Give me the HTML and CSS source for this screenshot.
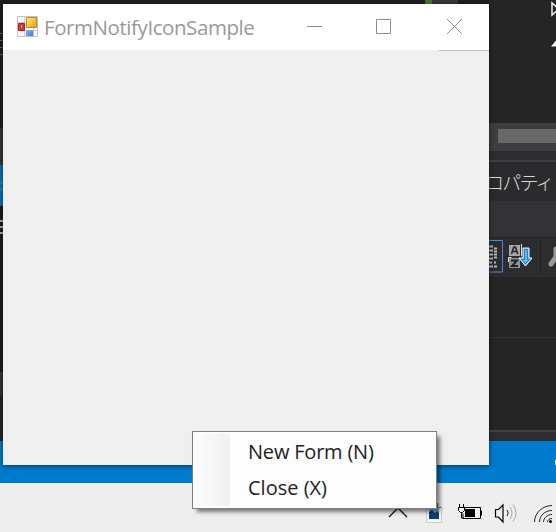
FILE: index.html
```html
<!DOCTYPE html>
<html lang="en">
<head>
<meta charset="utf-8">
<title>FormNotifyIconSample</title>
<link rel="stylesheet" href="styles.css">
</head>
<body>
<div class="desktop">
  <div class="ide">
    <div class="ide-main">
      <div class="ide-left">
        <div class="code-edge"><i></i><i></i><i></i><i></i></div>
        <div class="left-scroll"></div>
        <div class="left-tab"><i></i><i></i></div>
        <div class="left-list"><i></i><i></i><i></i></div>
        <div class="left-bar"></div>
      </div>
      <div class="tabs-edge"><i class="green"></i><i class="grey"></i></div>
      <div class="ide-right">
        <div class="explorer">
          <svg width="67" height="60" viewBox="489 0 67 60"><path d="M552 3v12l7-6z" fill="none" stroke="#eee" stroke-width="1.5"/><path d="M551 46.500L558 38v8.500z" fill="#fff"/></svg>
        </div>
        <div class="hscroll"><div class="thumb"></div></div>
        <div class="splitter"></div>
        <div class="props-title">ロパティ</div>
        <div class="props-object"></div>
        <div class="props-tools">
          <svg width="67" height="39" viewBox="489 238 67 39">
            <path d="M489 240.500H502.500V272H489" fill="none" stroke="#3b91dc"/>
            <path d="M489 246.500h4M489 250.500h4M489 254.500h4M489 258.500h4M489 262.500h3M489 266.500h4" stroke="#b5b5b5" stroke-width="2"/>
            <path d="M494 248.500h3M494 251.500h3M494 254.500h3M494 257.500h3M494 262.500h2M494 266.500h3" stroke="#b5b5b5" stroke-width="2"/>
            <path d="M509 245h11v11h-11z" fill="#aaa8a5"/><path d="M511.500 254l2.300-7h1.600l2.300 7M512.500 251.500h4.500" fill="none" stroke="#29292c" stroke-width="1.700"/>
            <path d="M509 258h11v10h-11z" fill="#929292"/><path d="M511 260.500h6l-5 5.500h6" fill="none" stroke="#222" stroke-width="2"/>
            <path d="M508.500 262v-4.500h3M521.500 244v12" fill="none" stroke="#ddd"/>
            <path d="M523 248h6v10h3l-6.500 8-6.500-8h4z" fill="#55b4f5" stroke="#eef6fc"/><path d="M524.500 249.500h3v10h2l-4 4-4-4h3z" fill="#59bafa" stroke="#23699c" stroke-width=".7"/>
            <path d="M540.500 240v34" stroke="#222225"/>
            <path d="M551 264l5-7v-8" fill="none" stroke="#999" stroke-width="5" stroke-linecap="round" stroke-linejoin="round"/>
          </svg>
        </div>
        <div class="props-grid"></div>
        <div class="props-help"></div>
        <div class="ide-margin"></div>
      </div>
    </div>
    <div class="statusbar"><span class="grip"></span></div>
  </div>
  <div class="taskbar">
    <svg width="176" height="49" viewBox="380 483 176 49">
      <path d="M389 517l9-9 9 9" fill="none" stroke="#111" stroke-width="1.300"/>
      <path d="M426.500 503.500h11l4 4v15h-15z" fill="#f6f4f1" stroke="#cfcac4"/><path d="M437.500 503v4.500h4" fill="none" stroke="#777"/>
      <path d="M429 508h10v11h-10z" fill="#76b7e5"/><path d="M429 512l3-2 3 3 2-2 2 2v6h-10z" fill="#073f7c"/>
      <path d="M464 507.500h16.500v11H463v-5M481.500 510.500v5" fill="none" stroke="#000"/><path d="M465 509h10v8h-10z"/>
      <path d="M459.500 504v3M463.500 504v3M458.500 507.500h6v3l-2 2h-2l-2-2zM461.500 512v6h2" fill="none" stroke="#000"/>
      <path d="M495.500 509.500h3l4.500-4.500v17l-4.500-5h-3z" fill="none" stroke="#000" stroke-width="1.200"/><path d="M507 510q2.500 3 0 6" fill="none" stroke="#222"/><path d="M510 507q4 6 0 12M513 504.500q6 8.500 0 17" fill="none" stroke="#aaa"/>
      <path d="M534.500 522c0-9 8-16.500 17.500-16.500M539.500 522c0-6 5-11.500 12.500-11.500M543.500 522c0-4 4-7.500 8.500-7.500M547.500 522c0-2 2-3.500 4.500-3.500" fill="none" stroke="#222"/><circle cx="550.500" cy="521.500" r="1.500"/>
    </svg>
  </div>

  <div class="window">
    <div class="titlebar">
      <svg class="app-icon" width="22" height="22" viewBox="0 0 22 22">
        <defs><linearGradient id="gold" x2="1" y2="1"><stop stop-color="#ffe98a"/><stop offset="1" stop-color="#dda000"/></linearGradient><linearGradient id="blue" x2="1" y2="1"><stop stop-color="#8ab9f5"/><stop offset="1" stop-color="#3974d3"/></linearGradient></defs>
        <path d="M.5.500h20v20H.5z" fill="#f8f9fb" stroke="#bdc3ce"/><path d="M7.500 1v19M1 14.500h19M16.500 12v8M1 6.500h7" stroke="#c5cad3"/>
        <path d="M9.500 1.500h10v10h-10z" fill="url(#gold)" stroke="#b98e17"/><path d="M1.500 7.500h6v7h-6z" fill="#c9372e" stroke="#a52823"/><path d="M4 9h1v3H4z" fill="#ffb5a6"/><path d="M9 14h7v6H9z" fill="url(#blue)"/>
      </svg>
      <span class="caption">FormNotifyIconSample</span>
      <svg class="controls" width="189" height="46" viewBox="300 4 189 46" fill="none" stroke="#8c8c8c"><path d="M307 26.500h15M376.500 19.500h14v14h-14zM447 19l15 15M462 19l-15 15"/></svg>
    </div>
    <div class="client"><div class="edge"></div></div>
  </div>

  <div class="menu">
    <div class="gutter"></div>
    <div class="items"><div class="item">New Form (N)</div><div class="item close">Close (X)</div></div>
  </div>
</div>
</body>
</html>
```
FILE: styles.css
```css
* { box-sizing: border-box; }
body { margin: 0; overflow: hidden; }
svg { display: block; }
.desktop { position: relative; width: 556px; height: 532px; overflow: hidden; background: #252526; font-family: "Open Sans", "Noto Sans CJK JP", sans-serif; }
.ide { height: 483px; display: flex; flex-direction: column; }
.ide-main { height: 441px; display: flex; }
.ide-left { width: 3px; }
.code-edge { height: 128px; padding-top: 33px; background: #1e1e1e; }
.code-edge i { display: block; height: 1px; margin-bottom: 6px; background: #527052; }
.left-scroll { height: 37px; background: #37373b; }
.left-tab { height: 41px; padding: 17px 0 0 1px; background: #0870b8; }
.left-tab i { display: block; width: 1px; height: 2px; margin-bottom: 4px; background: #5b9fd0; }
.left-list { height: 166px; padding-top: 14px; background: #1c1c1e; }
.left-list i { display: block; height: 2px; margin-bottom: 4px; background: #aaa; }
.left-bar { height: 24px; background: #343438; }
.tabs-edge { width: 486px; height: 4px; display: flex; padding-left: 422px; background: #1e1e1e; }
.tabs-edge i { height: 4px; }
.green { width: 7px; background: #507030; }
.grey { width: 26px; background: #37373b; }
.ide-right { width: 67px; }
.explorer { height: 123px; background: #252526; }
.hscroll { height: 28px; padding: 6px 0 0 9px; background: #3e3e42; }
.thumb { height: 14px; background: #686868; }
.splitter { height: 11px; background: #2d2d30; border-bottom: 2px solid #3f3f46; }
.props-title { height: 39px; margin-left: -4px; background: #2b2b2e; color: #d8d8d8; font: 300 19px/40px "Noto Sans CJK JP", sans-serif; letter-spacing: -1.800px; white-space: nowrap; }
.props-object { height: 36px; background: #333337; }
.props-tools { height: 40px; background: #2d2d30; border-top: 1px solid #252528; }
.props-grid { height: 61px; background: #252526; border-bottom: 1px solid #323235; }
.props-help { height: 92px; background: #252526; }
.ide-margin { height: 11px; background: #2d2d30; border-top: 2px solid #3f3f46; }
.statusbar { height: 42px; background: #007acc; display: flex; justify-content: flex-end; padding-top: 19px; }
.grip { width: 1px; height: 5px; background: #d8ecfa; }
.taskbar { height: 49px; background: #eee; display: flex; justify-content: flex-end; }
.window { position: absolute; left: 3px; top: 4px; width: 486px; height: 461px; background: #efefef; box-shadow: 0 1px 5px rgba(0,0,0,.55); }
.titlebar { height: 46px; background: #fff; display: flex; align-items: center; }
.app-icon { margin: 0 5px 1px 14px; }
.caption { color: #999; font-size: 20.500px; letter-spacing: -.430px; line-height: 46px; width: 256px; white-space: nowrap; }
.client { display: flex; justify-content: flex-end; }
.edge { width: 50px; height: 1px; background: #c0c0c0; }
.menu { position: absolute; left: 192px; top: 431px; width: 245px; height: 78px; padding: 2px; display: flex; background: #fdfdfd; border: 1px solid #808080; box-shadow: 4px 4px 4px -1px rgba(0,0,0,.5); }
.gutter { width: 35px; background: linear-gradient(90deg, #fcfcfc, #f0f0f0); }
.items { padding-left: 18px; }
.item { height: 36px; line-height: 36px; font-size: 20px; letter-spacing: -.200px; color: #222; white-space: nowrap; }
.close { letter-spacing: 0; }
```
